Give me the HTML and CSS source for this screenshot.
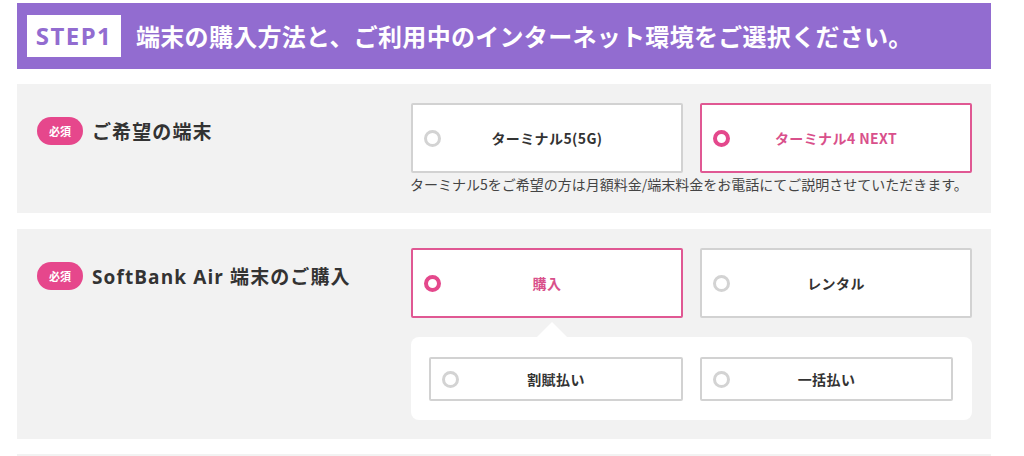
FILE: index.html
```html
<!DOCTYPE html>
<html lang="ja">
<head>
<meta charset="utf-8">
<title>STEP1</title>
<link rel="stylesheet" href="styles.css">
</head>
<body>
<div class="page">
  <div class="step-header">
    <span class="step-tag">STEP1</span>
    <h2 class="step-title">端末の購入方法と、ご利用中のインターネット環境をご選択ください。</h2>
  </div>

  <div class="section">
    <div class="label"><span class="badge">必須</span><span class="label-text">ご希望の端末</span></div>
    <div class="options">
      <div class="choices">
        <div class="choice"><span class="radio"></span><span class="choice-text">ターミナル5(5G)</span></div>
        <div class="choice is-selected"><span class="radio"></span><span class="choice-text">ターミナル4 NEXT</span></div>
      </div>
      <p class="note">ターミナル5をご希望の方は月額料金/端末料金をお電話にてご説明させていただきます。</p>
    </div>
  </div>

  <div class="section">
    <div class="label"><span class="badge">必須</span><span class="label-text">SoftBank Air 端末のご購入</span></div>
    <div class="options">
      <div class="choices">
        <div class="choice is-selected"><span class="radio"></span><span class="choice-text">購入</span></div>
        <div class="choice"><span class="radio"></span><span class="choice-text">レンタル</span></div>
      </div>
      <div class="subpanel">
        <div class="subchoice"><span class="radio"></span><span class="choice-text">割賦払い</span></div>
        <div class="subchoice"><span class="radio"></span><span class="choice-text">一括払い</span></div>
      </div>
    </div>
  </div>

  <div class="section section-next"></div>
</div>
</body>
</html>
```

FILE: styles.css
```css
* { box-sizing: border-box; }
html, body { margin: 0; padding: 0; background: #ffffff; }
body {
  font-family: "Noto Sans CJK JP", "Noto Sans", sans-serif;
  color: #333333;
}
.page {
  width: 974px;
  margin-left: 17px;
  padding-top: 3px;
}
.step-header {
  height: 66px;
  background: #926cd0;
  display: flex;
  align-items: center;
  padding-left: 10px;
}
.step-tag {
  background: #ffffff;
  color: #926cd0;
  font-family: "Noto Sans", "Open Sans", sans-serif;
  font-weight: 700;
  font-size: 24px;
  letter-spacing: 1.5px;
  height: 42px;
  line-height: 42px;
  width: 94px;
  text-align: center;
  margin-right: 15px;
}
.step-title {
  margin: 0;
  color: #ffffff;
  font-size: 24px;
  font-weight: 700;
  letter-spacing: 0.3px;
  line-height: 1;
}
.section {
  background: #f2f2f2;
  margin-top: 15px;
  padding: 19px 20px 19px 20px;
  display: flex;
}
.section + .section { margin-top: 16px; }
.section-next { height: 10px; padding: 0; margin-top: 15px !important; }
.label {
  width: 374px;
  flex: none;
  display: flex;
  align-items: center;
  gap: 9px;
  height: 28px;
  margin-top: 14px;
}
.badge {
  width: 46px;
  height: 28px;
  border-radius: 14px;
  background: #e6478c;
  color: #ffffff;
  font-size: 11px;
  font-weight: 700;
  display: flex;
  align-items: center;
  justify-content: center;
}
.label-text {
  font-family: "Open Sans", "Noto Sans CJK JP", sans-serif;
  font-size: 19px;
  font-weight: 700;
  letter-spacing: 1.1px;
  color: #333333;
}
.options { width: 561px; }
.choices {
  display: grid;
  grid-template-columns: 272px 272px;
  column-gap: 17px;
}
.choice, .subchoice {
  background: #ffffff;
  border: 2px solid #d2d2d2;
  border-radius: 2px;
  display: flex;
  align-items: center;
  padding-left: 11px;
}
.choice { height: 70px; }
.subchoice { height: 44px; }
.radio {
  width: 17px;
  height: 17px;
  flex: none;
  border-radius: 50%;
  border: 3.5px solid #d3d3d3;
  background: #ffffff;
}
.choice-text {
  flex: 1;
  text-align: center;
  margin-right: 28px;
  font-size: 14px;
  font-weight: 700;
  letter-spacing: 0.4px;
  color: #333333;
}
.choice.is-selected { border-color: #e05893; }
.choice.is-selected .radio { border: 4px solid #e4488c; }
.choice.is-selected .choice-text { color: #d9508b; }
.note {
  margin: 1px 0 0 -1px;
  font-size: 14px;
  line-height: 20px;
  color: #444444;
}
.subpanel {
  position: relative;
  margin-top: 19px;
  background: #ffffff;
  border-radius: 8px;
  padding: 20px 19px 19px 18px;
  display: grid;
  grid-template-columns: 254px 253px;
  column-gap: 17px;
}
.subpanel::before {
  content: "";
  position: absolute;
  left: 126px;
  top: -15px;
  border-left: 15px solid transparent;
  border-right: 15px solid transparent;
  border-bottom: 15px solid #ffffff;
}
```
